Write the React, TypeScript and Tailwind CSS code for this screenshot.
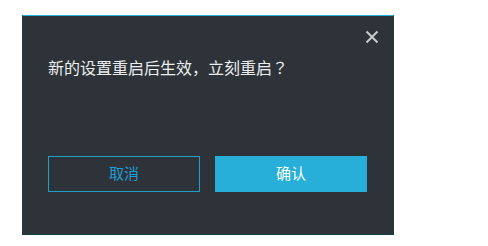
export default function App() {
  return (
    <div className="min-h-[246px] w-[488px] bg-white pl-[22px] pt-[15px] font-['Liberation_Sans','Noto_Sans_CJK_SC',sans-serif]">
      <div className="relative flex h-[220px] w-[372px] flex-col border-x border-b border-[#123f4c] border-t-[#24b0d8] border-t bg-[#2e333a] pl-[25px] pr-[26px] pt-[41px]">
        <button className="absolute right-[14px] top-[14px] flex h-[14px] w-[14px] items-center justify-center text-[#c9cbcd]">
          <svg viewBox="0 0 14 14" width="14" height="14" fill="none" stroke="currentColor" strokeWidth="2">
            <path d="M1.5 1.5 L12.5 12.5 M12.5 1.5 L1.5 12.5" />
          </svg>
        </button>
        <p className="h-[24px] text-[16px] leading-[24px] text-[#eceef0]">
          新的设置重启后生效，立刻重启
          <span className="font-['Noto_Sans_CJK_TC',sans-serif] leading-none">？</span>
        </p>
        <div className="mt-[75px] flex gap-[15px]">
          <button className="h-[36px] w-[152px] border border-[#1e9fca] text-[15px] text-[#1c9fd6]">取消</button>
          <button className="h-[36px] w-[152px] bg-[#27afd9] text-[15px] text-white">确认</button>
        </div>
      </div>
    </div>
  );
}
